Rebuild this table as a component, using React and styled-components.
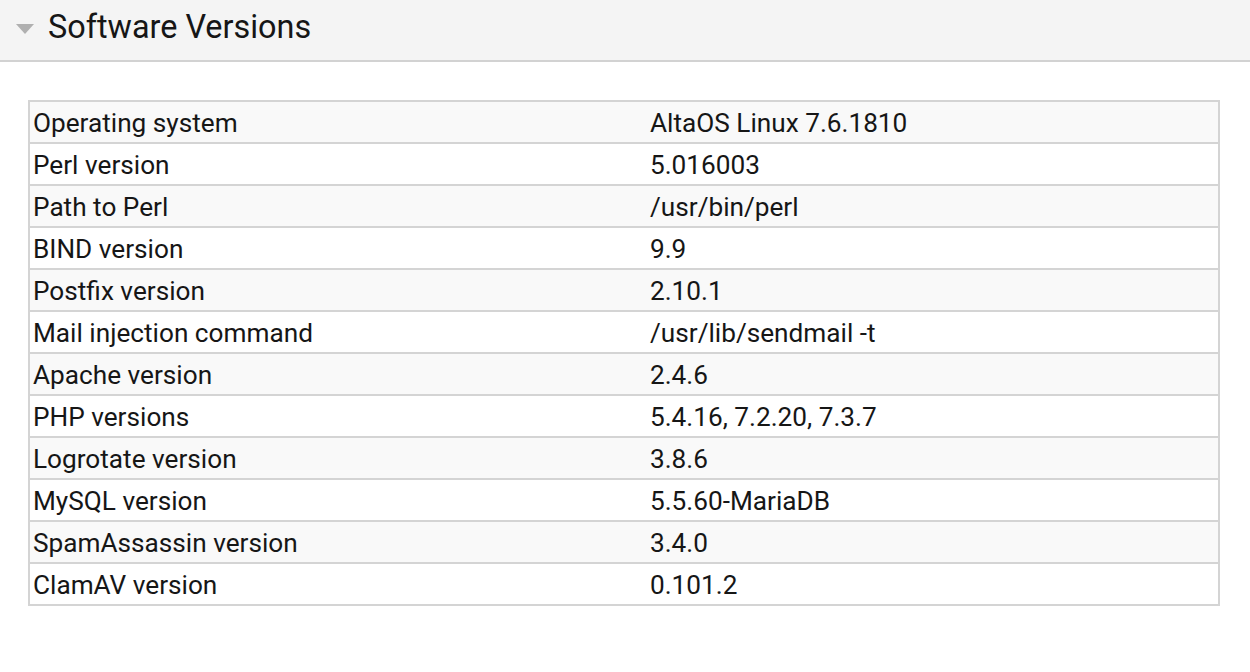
import styled, { createGlobalStyle } from "styled-components";
import React from "react";

const GlobalStyle = createGlobalStyle`
  body {
    margin: 0;
    background: #fff;
    font-family: Roboto, "Liberation Sans", sans-serif;
    color: #161616;
  }
`;

const PanelHeader = styled.div`
  height: 62px;
  background: #f4f4f4;
  border-bottom: 2px solid #d2d2d2;
  display: flex;
  align-items: center;
  padding-left: 16px;
  padding-bottom: 6px;
  box-sizing: border-box;
`;

const Caret = styled.span`
  width: 0;
  height: 0;
  border-left: 9.5px solid transparent;
  border-right: 9.5px solid transparent;
  border-top: 10px solid #b0b0b0;
  margin-right: 14px;
  margin-top: 4px;
`;

const Title = styled.h2`
  margin: 0;
  font-size: 32.4px;
  font-weight: 400;
  color: #161616;
`;

const Body = styled.div`
  padding: 38px 30px 0 28px;
`;

const Table = styled.table`
  width: 1192px;
  border-collapse: collapse;
  border: 2px solid #d4d4d4;
  font-size: 26.2px;
`;

const Row = styled.tr`
  background: ${(p) => (p.$odd ? "#f9f9f9" : "#fff")};
  border-bottom: 2px solid #d4d4d4;
`;

const Cell = styled.td`
  padding: 2px 3px 0;
  width: ${(p) => p.$w || "auto"};
  vertical-align: middle;
  line-height: 38px;
  height: 38px;
`;

const rows = [
  ["Operating system", "AltaOS Linux 7.6.1810"],
  ["Perl version", "5.016003"],
  ["Path to Perl", "/usr/bin/perl"],
  ["BIND version", "9.9"],
  ["Postfix version", "2.10.1"],
  ["Mail injection command", "/usr/lib/sendmail -t"],
  ["Apache version", "2.4.6"],
  ["PHP versions", "5.4.16, 7.2.20, 7.3.7"],
  ["Logrotate version", "3.8.6"],
  ["MySQL version", "5.5.60-MariaDB"],
  ["SpamAssassin version", "3.4.0"],
  ["ClamAV version", "0.101.2"],
];

export default function App() {
  return (
    <>
      <GlobalStyle />
      <PanelHeader>
        <Caret />
        <Title>Software Versions</Title>
      </PanelHeader>
      <Body>
        <Table>
          <tbody>
            {rows.map(([k, v], i) => (
              <Row key={k} $odd={i % 2 === 0}>
                <Cell $w="611px">{k}</Cell>
                <Cell>{v}</Cell>
              </Row>
            ))}
          </tbody>
        </Table>
      </Body>
    </>
  );
}
